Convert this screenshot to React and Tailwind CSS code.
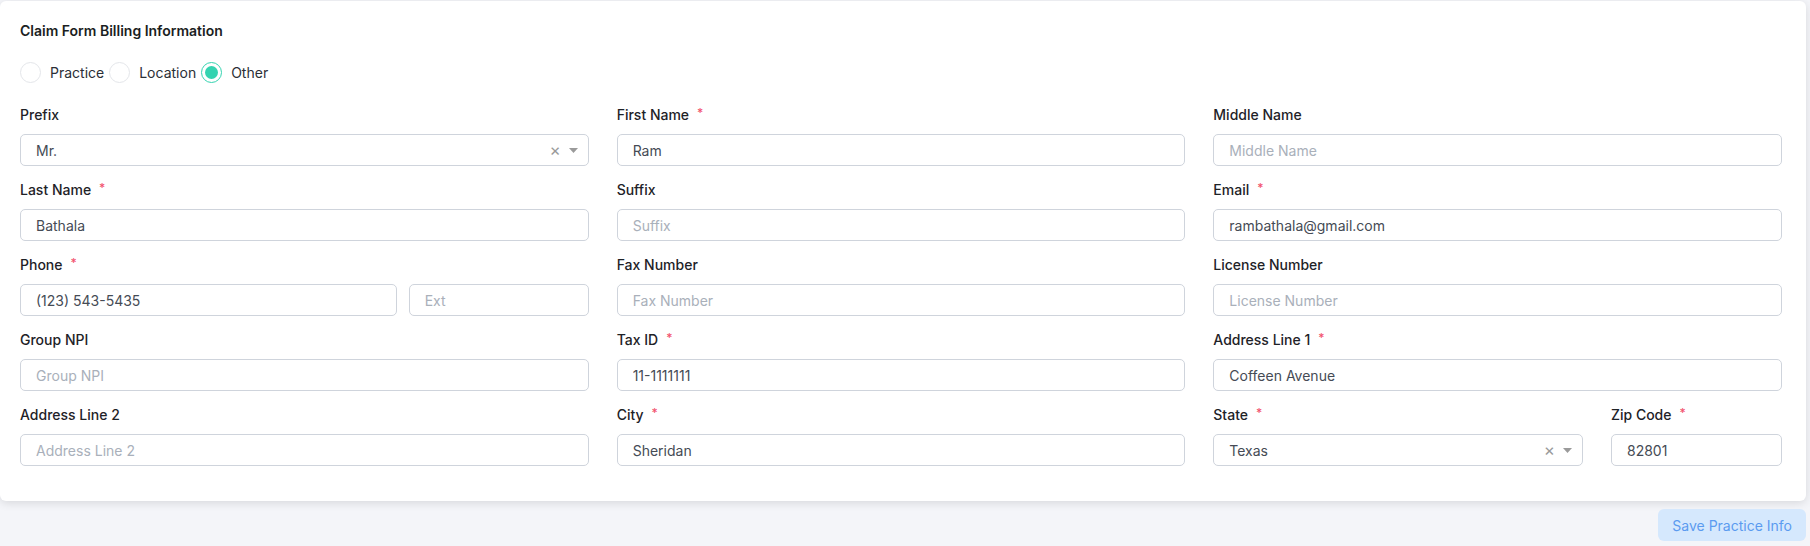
import { useState } from 'react';

function Label({ children, required }) {
    return (
        <label className="block h-5 leading-5 mb-[9px] text-[14px] font-medium text-[#1e2227]">
            {children}
            {required && <span className="relative -top-[3px] ml-2 text-[12px] text-[#f2546f]">*</span>}
        </label>
    );
}

function TextInput({ value, placeholder }) {
    return (
        <input
            defaultValue={value}
            placeholder={placeholder}
            className="block w-full h-8 rounded-[5px] border border-[#cfd4dc] bg-white px-[15px] text-[14px] text-[#454b55] placeholder:text-[#a9b0ba] outline-none"
        />
    );
}

function SelectInput({ value }) {
    return (
        <div className="flex items-center w-full h-8 rounded-[5px] border border-[#cfd4dc] bg-white pl-[15px] pr-[10px] text-[14px] text-[#454b55]">
            <span className="flex-1">{value}</span>
            <span className="text-[17px] leading-none text-[#9a9a9a] mr-[8px]">×</span>
            <svg width="9" height="5" viewBox="0 0 9 5" className="fill-[#9a9a9a]">
                <path d="M0 0h9L4.5 5z" />
            </svg>
        </div>
    );
}

function Field({ label, required, children }) {
    return (
        <div>
            <Label required={required}>{label}</Label>
            {children}
        </div>
    );
}

function Radio({ label, checked, onClick }) {
    return (
        <button onClick={onClick} className="flex items-center gap-[9px] text-[14px] text-[#2b2f36]">
            <span
                className={`flex items-center justify-center w-[21px] h-[21px] rounded-full border bg-white ${checked ? 'border-[#34d3b0]' : 'border-[#e4e6ea]'}`}
            >
                {checked && <span className="w-[13px] h-[13px] rounded-full bg-[#34d3b0]"></span>}
            </span>
            <span className="mr-[5px]">{label}</span>
        </button>
    );
}

export default function App() {
    const [source, setSource] = useState('Other');

    return (
        <div className="w-[1810px] h-[546px] bg-[#f4f5f9] pt-px font-['Inter',sans-serif] overflow-hidden">
            <div className="w-[1806px] bg-white rounded-md shadow-[0_2px_10px_rgba(0,0,0,0.12)] pl-5 pr-6 pt-5 pb-[35px]">
                <h2 className="h-5 leading-5 text-[14px] font-semibold text-[#1b1e22]">Claim Form Billing Information</h2>

                {/* Billing source */}
                <div className="flex items-center h-[22px] mt-[20px] mb-[22px]">
                    {['Practice', 'Location', 'Other'].map((opt) => (
                        <Radio key={opt} label={opt} checked={source === opt} onClick={() => setSource(opt)} />
                    ))}
                </div>

                <div className="grid grid-cols-3 gap-x-[28px] gap-y-[14px]">
                    <Field label="Prefix">
                        <SelectInput value="Mr." />
                    </Field>
                    <Field label="First Name" required>
                        <TextInput value="Ram" />
                    </Field>
                    <Field label="Middle Name">
                        <TextInput placeholder="Middle Name" />
                    </Field>

                    <Field label="Last Name" required>
                        <TextInput value="Bathala" />
                    </Field>
                    <Field label="Suffix">
                        <TextInput placeholder="Suffix" />
                    </Field>
                    <Field label="Email" required>
                        <TextInput value="rambathala@gmail.com" />
                    </Field>

                    <Field label="Phone" required>
                        <div className="grid grid-cols-[1fr_180px] gap-3">
                            <TextInput value="(123) 543-5435" />
                            <TextInput placeholder="Ext" />
                        </div>
                    </Field>
                    <Field label="Fax Number">
                        <TextInput placeholder="Fax Number" />
                    </Field>
                    <Field label="License Number">
                        <TextInput placeholder="License Number" />
                    </Field>

                    <Field label="Group NPI">
                        <TextInput placeholder="Group NPI" />
                    </Field>
                    <Field label="Tax ID" required>
                        <TextInput value="11-1111111" />
                    </Field>
                    <Field label="Address Line 1" required>
                        <TextInput value="Coffeen Avenue" />
                    </Field>

                    <Field label="Address Line 2">
                        <TextInput placeholder="Address Line 2" />
                    </Field>
                    <Field label="City" required>
                        <TextInput value="Sheridan" />
                    </Field>
                    <div className="grid grid-cols-[1fr_171px] gap-x-[28px]">
                        <Field label="State" required>
                            <SelectInput value="Texas" />
                        </Field>
                        <Field label="Zip Code" required>
                            <TextInput value="82801" />
                        </Field>
                    </div>
                </div>
            </div>

            <div className="flex justify-end w-[1806px] mt-2">
                <button className="h-8 px-[14px] rounded-md bg-[#d5e8fd] text-[14px] text-[#5b9bf0]">Save Practice Info</button>
            </div>
        </div>
    );
}
